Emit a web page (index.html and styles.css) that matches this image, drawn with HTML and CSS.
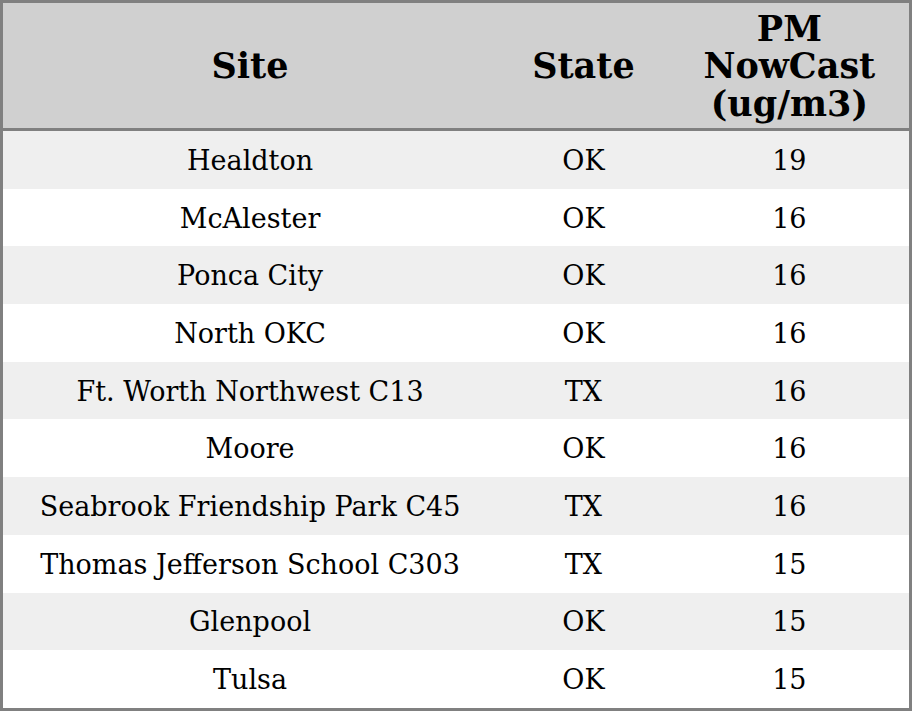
FILE: index.html
```html
<!DOCTYPE html>
<html>
<head>
<meta charset="utf-8">
<link rel="stylesheet" href="styles.css">
</head>
<body>
<table class="aq">
  <colgroup>
    <col class="c-site">
    <col class="c-state">
    <col class="c-pm">
  </colgroup>
  <thead>
    <tr><th>Site</th><th>State</th><th>PM<br>NowCast<br>(ug/m3)</th></tr>
  </thead>
  <tbody>
    <tr><td>Healdton</td><td>OK</td><td>19</td></tr>
    <tr><td>McAlester</td><td>OK</td><td>16</td></tr>
    <tr><td>Ponca City</td><td>OK</td><td>16</td></tr>
    <tr><td>North OKC</td><td>OK</td><td>16</td></tr>
    <tr><td>Ft. Worth Northwest C13</td><td>TX</td><td>16</td></tr>
    <tr><td>Moore</td><td>OK</td><td>16</td></tr>
    <tr><td>Seabrook Friendship Park C45</td><td>TX</td><td>16</td></tr>
    <tr><td>Thomas Jefferson School C303</td><td>TX</td><td>15</td></tr>
    <tr><td>Glenpool</td><td>OK</td><td>15</td></tr>
    <tr><td>Tulsa</td><td>OK</td><td>15</td></tr>
  </tbody>
</table>
</body>
</html>
```
FILE: styles.css
```css
html, body {
  margin: 0;
  padding: 0;
  background: #ffffff;
}
.aq {
  width: 912px;
  border-collapse: collapse;
  border: 3px solid #808080;
  font-family: "DejaVu Serif", serif;
  color: #000;
  table-layout: fixed;
}
.c-site { width: 494px; }
.c-state { width: 172px; }
.c-pm { width: 240px; }
.aq th {
  background: #d0d0d0;
  font-size: 35px;
  font-weight: bold;
  line-height: 37.5px;
  height: 124px;
  padding: 1px 0 0;
  text-align: center;
  vertical-align: middle;
  border-bottom: 3px solid #808080;
}
.aq td {
  font-size: 27px;
  line-height: 30px;
  height: 55.7px;
  padding: 2px 0 0;
  text-align: center;
  vertical-align: middle;
}
.aq tbody tr:nth-child(odd) td {
  background: #efefef;
}
```
